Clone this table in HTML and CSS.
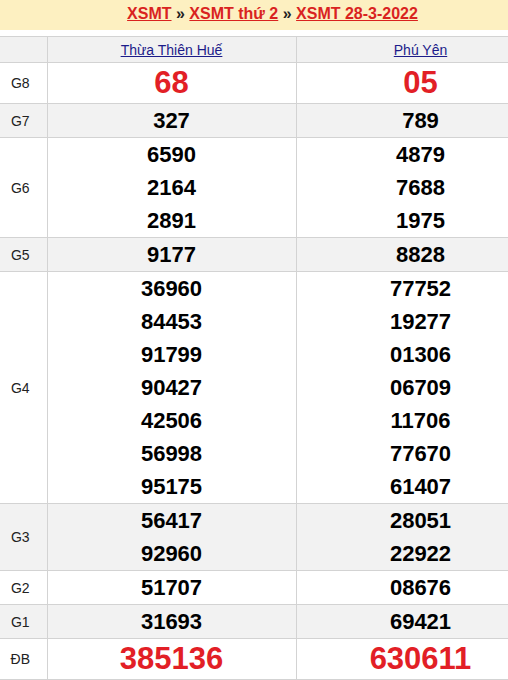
FILE: index.html
```html
<!DOCTYPE html>
<html lang="vi">
<head>
<meta charset="utf-8">
<title>XSMT 28-3-2022</title>
<link rel="stylesheet" href="styles.css">
</head>
<body>
<div class="frame">
<div class="page">
  <div class="crumbs">
    <a href="#">XSMT</a> <span class="sep">»</span> <a href="#">XSMT thứ 2</a> <span class="sep">»</span> <a href="#">XSMT 28-3-2022</a>
  </div>
  <table class="results">
    <colgroup><col class="c-label"><col class="c-prov"><col class="c-prov"></colgroup>
    <tr class="head">
      <th></th>
      <th><a href="#">Thừa Thiên Huế</a></th>
      <th><a href="#">Phú Yên</a></th>
    </tr>
    <tr class="g8">
      <td class="lbl">G8</td>
      <td><div class="big">68</div></td>
      <td><div class="big">05</div></td>
    </tr>
    <tr class="alt">
      <td class="lbl">G7</td>
      <td><div class="n">327</div></td>
      <td><div class="n">789</div></td>
    </tr>
    <tr>
      <td class="lbl">G6</td>
      <td><div class="n">6590</div><div class="n">2164</div><div class="n">2891</div></td>
      <td><div class="n">4879</div><div class="n">7688</div><div class="n">1975</div></td>
    </tr>
    <tr class="alt">
      <td class="lbl">G5</td>
      <td><div class="n">9177</div></td>
      <td><div class="n">8828</div></td>
    </tr>
    <tr>
      <td class="lbl">G4</td>
      <td><div class="n">36960</div><div class="n">84453</div><div class="n">91799</div><div class="n">90427</div><div class="n">42506</div><div class="n">56998</div><div class="n">95175</div></td>
      <td><div class="n">77752</div><div class="n">19277</div><div class="n">01306</div><div class="n">06709</div><div class="n">11706</div><div class="n">77670</div><div class="n">61407</div></td>
    </tr>
    <tr class="alt">
      <td class="lbl">G3</td>
      <td><div class="n">56417</div><div class="n">92960</div></td>
      <td><div class="n">28051</div><div class="n">22922</div></td>
    </tr>
    <tr>
      <td class="lbl">G2</td>
      <td><div class="n">51707</div></td>
      <td><div class="n">08676</div></td>
    </tr>
    <tr class="alt">
      <td class="lbl">G1</td>
      <td><div class="n">31693</div></td>
      <td><div class="n">69421</div></td>
    </tr>
    <tr class="db">
      <td class="lbl">ĐB</td>
      <td><div class="big">385136</div></td>
      <td><div class="big">630611</div></td>
    </tr>
  </table>
</div>
</div>
</body>
</html>
```
FILE: styles.css
```css
html, body {
  margin: 0;
  padding: 0;
  background: #fff;
}
body {
  font-family: "Liberation Sans", Arial, sans-serif;
}
.frame {
  width: 100%;
  overflow: hidden;
}
.page {
  width: 545px;
}
.crumbs {
  background: #fdf0c1;
  height: 30px;
  line-height: 28px;
  text-align: center;
  font-size: 16px;
  font-weight: bold;
  color: #222;
}
.crumbs a {
  color: #d9231f;
  text-decoration: underline;
}
.crumbs .sep {
  color: #222;
}
.results {
  margin-top: 6px;
  width: 545px;
  border-collapse: collapse;
  table-layout: fixed;
}
.c-label { width: 47px; }
.c-prov { width: 249px; }
.results th, .results td {
  border: 1px solid #d3d3d3;
  padding: 0;
  text-align: center;
}
.results th:first-child, .results td:first-child { border-left: none; }
.head th {
  background: #f1f1f1;
  height: 25px;
  font-weight: normal;
  font-size: 14px;
}
.head a {
  color: #1c1c8a;
  text-decoration: underline;
}
.lbl {
  font-size: 14px;
  color: #222;
  padding-right: 6px;
}
.results td.lbl { padding-right: 6px; }
.alt td { background: #f2f2f2; }
.n {
  font-size: 22px;
  font-weight: bold;
  color: #000;
  line-height: 33px;
  height: 33px;
}
.big {
  font-size: 31px;
  font-weight: bold;
  color: #e21f26;
  line-height: 40px;
  height: 40px;
}
```
